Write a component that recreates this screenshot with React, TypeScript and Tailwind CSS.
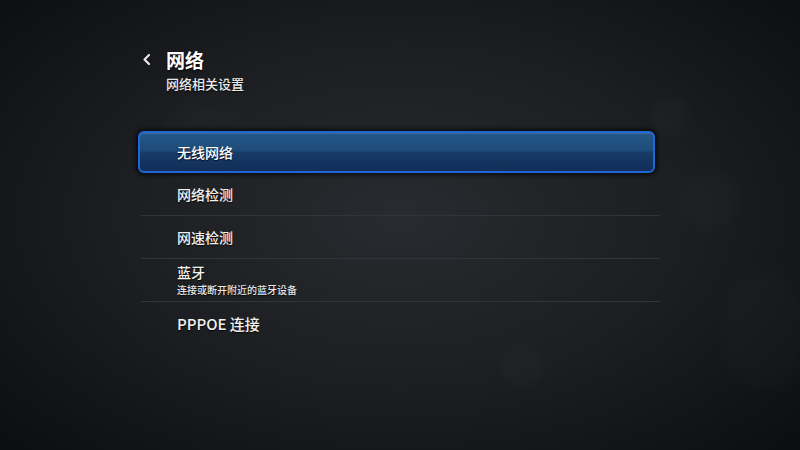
import React from "react";

const font = { fontFamily: '"Noto Sans CJK SC", "Noto Sans", sans-serif' };

function Row({ title, sub, last }: { title: string; sub?: string; last?: boolean }) {
  return (
    <div className={`h-[43px] ml-[3px] mr-[-5px] flex flex-col justify-center pl-[36px] ${last ? "" : "border-b border-[#313438]"}`}>
      <div className={`text-[#f2f2f2] font-medium ${title.startsWith("PPPOE") ? "text-[15px] leading-[18px]" : sub ? "text-[14px] leading-[15px]" : "text-[14px] leading-[16px]"} [text-shadow:0_1px_1px_rgba(0,0,0,0.8)]`}>{title}</div>
      {sub && <div className="text-[#e6e6e6] font-medium text-[10px] leading-[11px] mt-[4px] [text-shadow:0_1px_1px_rgba(0,0,0,0.8)]">{sub}</div>}
    </div>
  );
}

export default function App() {
  return (
    <div
      style={font}
      className="relative w-[800px] h-[450px] overflow-hidden bg-[radial-gradient(ellipse_70%_75%_at_50%_48%,#282b2f_0%,#1c1e21_50%,#0c0d0f_100%)]"
    >
      {/* faint background bokeh */}
      <div className="absolute left-[650px] top-[95px] w-[40px] h-[40px] rounded-full bg-[#ffffff] opacity-[0.01] blur-[4px]" />
      <div className="absolute left-[680px] top-[170px] w-[60px] h-[60px] rounded-full bg-[#ffffff] opacity-[0.012] blur-[6px]" />
      <div className="absolute left-[725px] top-[270px] w-[80px] h-[120px] rounded-full bg-[#ffffff] opacity-[0.012] blur-[8px]" />
      <div className="absolute left-[500px] top-[345px] w-[44px] h-[44px] rounded-full bg-[#ffffff] opacity-[0.01] blur-[5px]" />
      <div className="absolute left-[160px] top-[100px] w-[90px] h-[90px] rounded-full bg-[#ffffff] opacity-[0.008] blur-[10px]" />

      <div className="relative pt-[48px] pl-[138px] w-[662px]">
        <div className="flex items-start">
          <svg width="28" height="24" viewBox="0 0 28 24">
            <path d="M11 7 L6.5 11.5 L11 16" fill="none" stroke="#e8e8e8" strokeWidth="2.2" strokeLinecap="round" strokeLinejoin="round" />
          </svg>
          <div className="flex flex-col">
            <div className="text-white text-[19px] font-bold leading-[24px] [text-shadow:0_1px_2px_rgba(0,0,0,0.9)]">网络</div>
            <div className="text-[#eaeaea] text-[13px] font-medium leading-[16px] mt-[4px] [text-shadow:0_1px_1px_rgba(0,0,0,0.8)]">网络相关设置</div>
          </div>
        </div>

        <div className="mt-[39px] w-[517px]">
          <div className="h-[42px] rounded-[6px] border-2 border-[#1f66d6] bg-[linear-gradient(to_bottom,#245887_0%,#1e4c7b_45%,#163a66_52%,#112e58_100%)] shadow-[0_0_4px_2px_rgba(0,0,0,0.7),inset_0_1px_0_rgba(255,255,255,0.12)] flex items-center pl-[37px]">
            <div className="text-white font-medium text-[14px] leading-[16px] [text-shadow:0_1px_1px_rgba(0,0,0,0.8)]">无线网络</div>
          </div>
          <Row title="网络检测" />
          <Row title="网速检测" />
          <Row title="蓝牙" sub="连接或断开附近的蓝牙设备" />
          <Row title="PPPOE 连接" last />
        </div>
      </div>
    </div>
  );
}
